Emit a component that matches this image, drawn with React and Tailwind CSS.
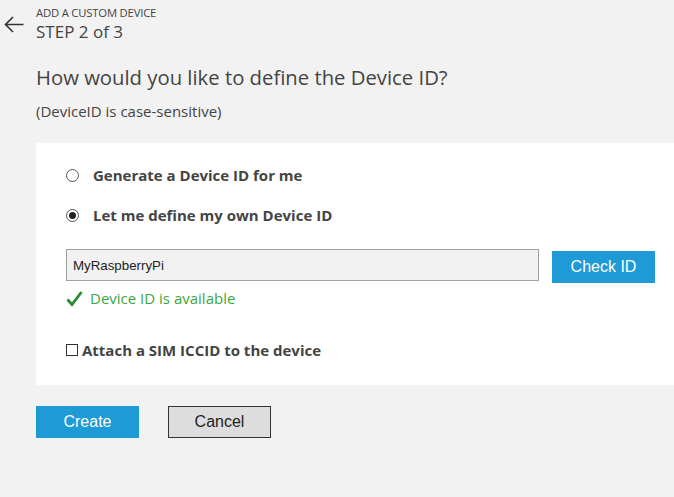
import React, { useState } from 'react';

const seg = { fontFamily: '"Open Sans", "Noto Sans", sans-serif' };
const arial = { fontFamily: '"Liberation Sans", Arial, sans-serif' };

const App = () => {
  const [mode, setMode] = useState('own');
  const [deviceId, setDeviceId] = useState('MyRaspberryPi');
  const [sim, setSim] = useState(false);

  return (
    <div className="w-[674px] h-[497px] bg-[#f2f2f2] text-[#444]" style={seg}>
      {/* header */}
      <div className="flex items-start pt-[5px]">
        <button className="w-[36px] flex pl-[4px] pt-[11px] text-[#333]">
          <svg width="20" height="17" viewBox="0 0 20 17" fill="none" stroke="currentColor" strokeWidth="1.6">
            <path d="M19.5 8.5H1.5M9 1L1.5 8.5L9 16" />
          </svg>
        </button>
        <div>
          <div className="text-[11.3px] leading-[16px] tracking-[-0.2px]">ADD A CUSTOM DEVICE</div>
          <div className="text-[17px] leading-[22px]">STEP 2 of 3</div>
        </div>
      </div>

      <div className="pl-[36px]">
        <h1 className="mt-[20px] text-[20.3px] leading-[28px] text-[#444]">How would you like to define the Device ID?</h1>
        <p className="mt-[10px] text-[15px] leading-[20px]">(DeviceID is case-sensitive)</p>

        {/* panel */}
        <div className="mt-[22px] bg-white h-[242px] pl-[30px] pt-[22px]">
          <label className="flex items-center h-[20px] cursor-pointer">
            <span className="w-[13px] h-[13px] rounded-full border border-[#555] bg-white flex items-center justify-center">
              {mode === 'gen' && <span className="w-[7px] h-[7px] rounded-full bg-[#222]" />}
            </span>
            <input type="radio" className="hidden" checked={mode === 'gen'} onChange={() => setMode('gen')} />
            <span className="ml-[14px] text-[15px] font-bold">Generate a Device ID for me</span>
          </label>
          <label className="flex items-center h-[20px] mt-[20px] cursor-pointer">
            <span className="w-[13px] h-[13px] rounded-full border border-[#555] bg-white flex items-center justify-center">
              {mode === 'own' && <span className="w-[7px] h-[7px] rounded-full bg-[#222]" />}
            </span>
            <input type="radio" className="hidden" checked={mode === 'own'} onChange={() => setMode('own')} />
            <span className="ml-[14px] text-[15px] font-bold">Let me define my own Device ID</span>
          </label>

          <div className="flex items-start mt-[24px]">
            <input
              value={deviceId}
              onChange={(e) => setDeviceId(e.target.value)}
              className="w-[473px] h-[32px] border border-[#a0a0a0] bg-[#f2f2f2] px-[6px] text-[13.3px] text-[#222] outline-none"
              style={arial}
            />
            <button className="ml-[13px] mt-[2px] w-[103px] h-[32px] bg-[#1e9ad6] text-white text-[16px]" style={arial}>
              Check ID
            </button>
          </div>

          <div className="flex items-center mt-[4px] h-[22px] text-[#3ea640]">
            <svg width="17" height="17" viewBox="0 0 17 17">
              <path d="M1.5 9.5L6 14.5L15.5 2" fill="none" stroke="#2c8a2f" strokeWidth="2.8" />
            </svg>
            <span className="ml-[7px] text-[15px]">Device ID is available</span>
          </div>

          <label className="flex items-center mt-[31px] h-[20px] cursor-pointer">
            <span className="w-[12px] h-[12px] border border-[#333] bg-white" />
            <input type="checkbox" className="hidden" checked={sim} onChange={(e) => setSim(e.target.checked)} />
            <span className="ml-[4px] text-[15px] font-bold">Attach a SIM ICCID to the device</span>
          </label>
        </div>

        <div className="flex mt-[21px]">
          <button className="w-[103px] h-[32px] bg-[#1e9ad6] text-white text-[16px]" style={arial}>Create</button>
          <button className="ml-[29px] w-[103px] h-[32px] bg-[#dddddd] border border-[#333] text-[#222] text-[16px]" style={arial}>Cancel</button>
        </div>
      </div>
    </div>
  );
};

export default App;
